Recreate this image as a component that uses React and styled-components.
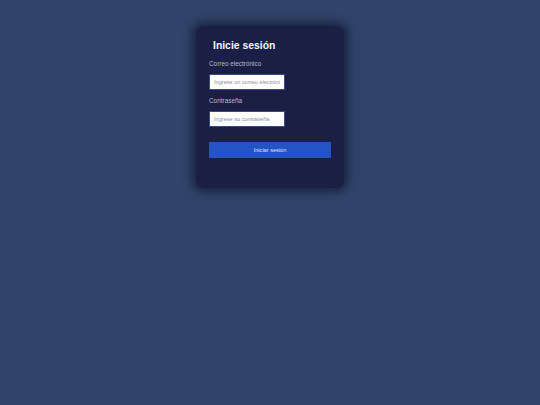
import React from "react";
import styled, { createGlobalStyle } from "styled-components";

const Global = createGlobalStyle`
  html, body { margin: 0; padding: 0; }
  body {
    background: #30446a;
    font-family: "Liberation Sans", Arial, sans-serif;
    min-height: 405px;
  }
`;

const Page = styled.div`
  display: flex;
  justify-content: center;
  padding-top: 26px;
`;

const Card = styled.form`
  width: 148px;
  box-sizing: border-box;
  background: #1b1e45;
  border-radius: 8px;
  padding: 13px 13px 30px;
  box-shadow: 0 0 10px 4px rgba(10, 14, 35, 0.6);
  display: flex;
  flex-direction: column;
`;

const Title = styled.h2`
  margin: 0 0 0 4px;
  font-size: 10.4px;
  font-weight: bold;
  color: #f2f3f8;
  line-height: 14px;
`;

const Label = styled.label`
  font-size: 6.4px;
  color: #b6bacb;
  margin-top: ${(p) => p.$mt}px;
  line-height: 9px;
`;

const Input = styled.input`
  width: 76px;
  height: 16px;
  box-sizing: border-box;
  margin-top: 6px;
  border: 1px solid #3b4a86;
  background: #ffffff;
  font-family: "Liberation Sans", Arial, sans-serif;
  font-size: 5.6px;
  padding: 0 4px;
  outline: none;
  &::placeholder { color: #8a8d99; }
`;

const Button = styled.button`
  margin-top: 15px;
  height: 16px;
  width: 100%;
  border: none;
  background: #2353c5;
  color: #dfe5f6;
  font-family: "Liberation Sans", Arial, sans-serif;
  font-size: 5.6px;
  padding: 0;
  cursor: pointer;
`;

export default function App() {
  return (
    <>
      <Global />
      <Page>
        <Card onSubmit={(e) => e.preventDefault()}>
          <Title>Inicie sesión</Title>
          <Label $mt={6}>Correo electrónico</Label>
          <Input type="email" placeholder="Ingrese un correo electrónico" />
          <Label $mt={6}>Contraseña</Label>
          <Input type="password" placeholder="Ingrese su contraseña" />
          <Button type="submit">Iniciar sesión</Button>
        </Card>
      </Page>
    </>
  );
}
